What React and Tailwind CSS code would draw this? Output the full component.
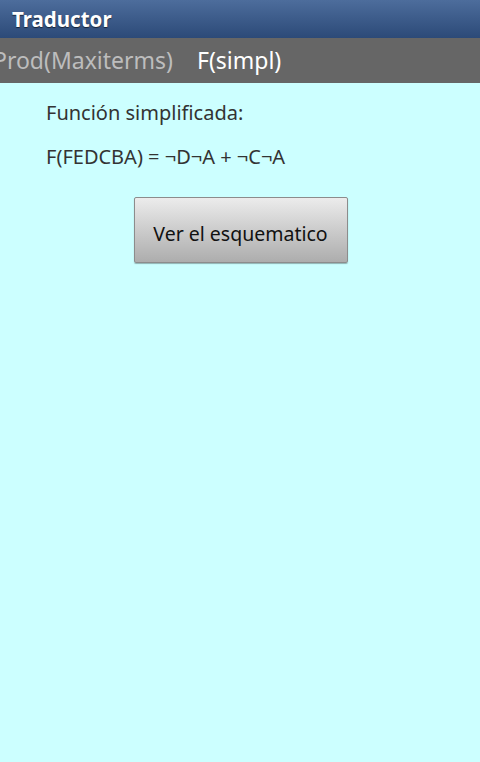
export default function App() {
  return (
    <div className="w-[480px] h-[762px] flex flex-col bg-[#ccffff] overflow-hidden font-['Noto_Sans',sans-serif]">
      {/* title bar */}
      <div className="h-[38px] shrink-0 bg-gradient-to-b from-[#4d6d9c] to-[#2c4a78] flex items-center px-[12px]">
        <span className="text-white font-bold text-[20.5px] [text-shadow:0_1px_1px_rgba(0,0,0,0.6)]">Traductor</span>
      </div>

      {/* tabs */}
      <div className="h-[45px] shrink-0 bg-[#666666] flex items-center gap-[24px] whitespace-nowrap -ml-[7px]">
        <span className="text-[#bdbdbd] text-[23px]">Prod(Maxiterms)</span>
        <span className="text-white text-[23px]">F(simpl)</span>
      </div>

      {/* content */}
      <div className="flex flex-col px-[46px] pt-[15px] text-[#333333] text-[20px]">
        <p className="leading-[30px]">Función simplificada:</p>
        <p className="leading-[30px] mt-[14px]">F(FEDCBA) = ¬D¬A + ¬C¬A</p>
      </div>

      <div className="flex justify-center pt-[25px] pl-[1px]">
        <button className="w-[214px] h-[66px] pt-[7px] rounded-[2px] border border-[#8c8c8c] bg-gradient-to-b from-[#ececec] to-[#adadad] text-[#111111] text-[19.5px] shadow-[0_1px_1px_rgba(0,0,0,0.3)]">
          Ver el esquematico
        </button>
      </div>
    </div>
  );
}
